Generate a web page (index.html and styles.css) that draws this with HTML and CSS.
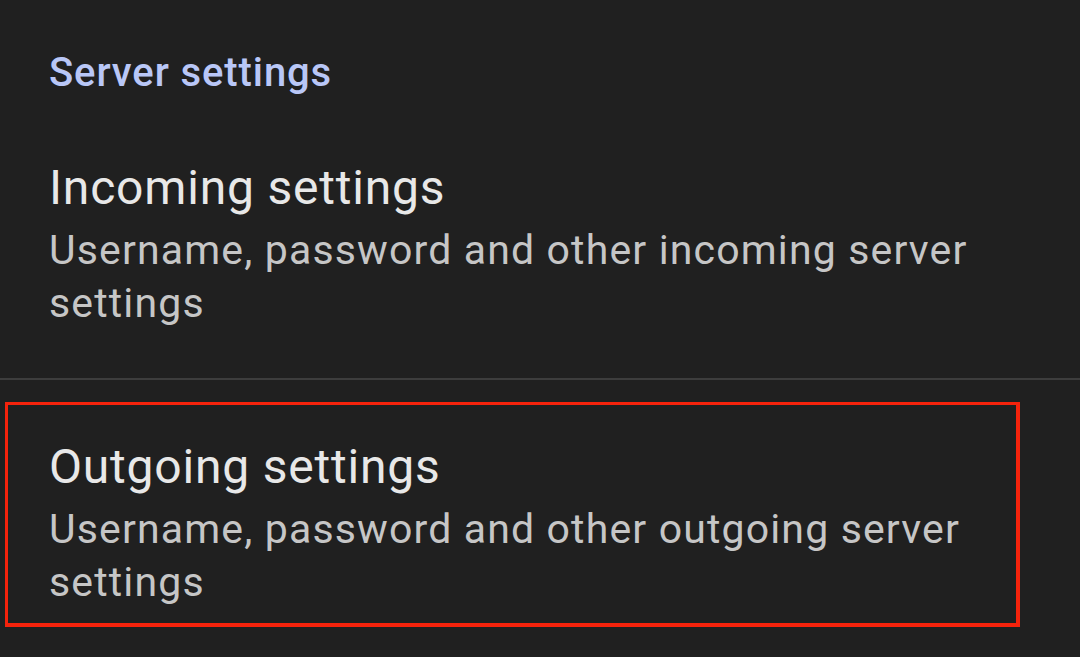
FILE: index.html
```html
<!DOCTYPE html>
<html lang="en">
<head>
    <meta charset="UTF-8">
    <meta name="viewport" content="width=device-width, initial-scale=1.0">
    <title>Server settings</title>
    <link rel="stylesheet" href="styles.css">
</head>
<body>

    <div class="category">Server settings</div>

    <div class="pref">
        <div class="pref-title">Incoming settings</div>
        <div class="pref-summary">Username, password and other incoming server settings</div>
    </div>

    <div class="divider"></div>

    <div class="pref highlighted">
        <div class="pref-title">Outgoing settings</div>
        <div class="pref-summary">Username, password and other outgoing server settings</div>
        <!-- annotation box drawn over the row -->
        <div class="mark"></div>
    </div>

</body>
</html>
```

FILE: styles.css
```css
/* General Styling */
body {
    margin: 0;
    background: #202020;
    font-family: Roboto, "Noto Sans", sans-serif;
    overflow: hidden;
}

/* Category header */
.category {
    padding: 49px 49px 0;
    font-size: 40px;
    line-height: 48px;
    font-weight: 500;
    letter-spacing: 0.9px;
    color: #b9c7f7;
}

/* Preference rows */
.pref {
    padding: 55px 80px 48px 49px;
}

.highlighted {
    position: relative;
    padding-top: 51px;
}

.pref-title {
    font-size: 48px;
    line-height: 72px;
    letter-spacing: 0.8px;
    color: #e8e8e8;
}

.pref-summary {
    font-size: 41px;
    line-height: 53px;
    letter-spacing: 1.15px;
    color: #c6c6c6;
}

.divider {
    height: 2px;
    background: #3d3d3d;
}

/* Red annotation box */
.mark {
    position: absolute;
    top: 22px;
    left: 5px;
    width: 1008px;
    height: 218px;
    border: 4px solid #f5230c;
    border-width: 3px 4px 4px 3px;
}
```
